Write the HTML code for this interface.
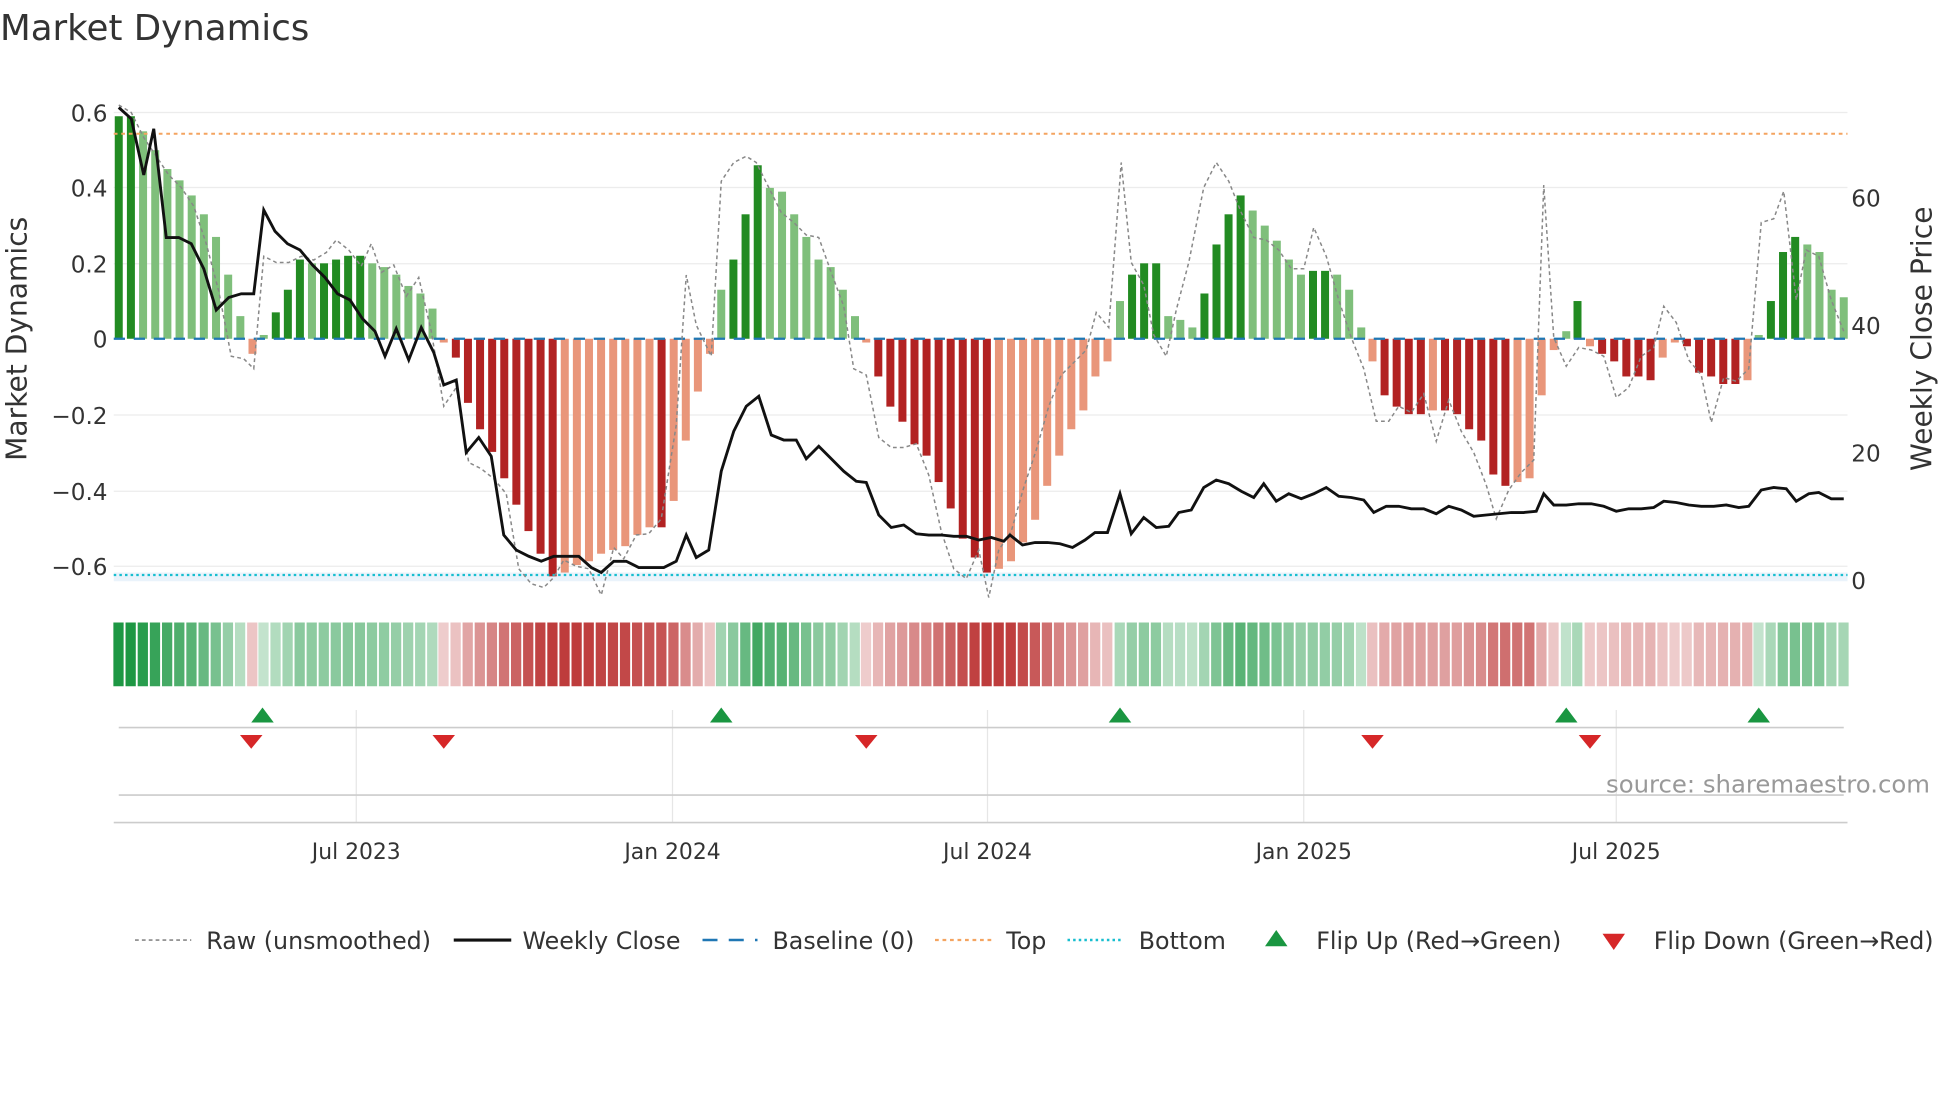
<!DOCTYPE html>
<html><head><meta charset="utf-8"><style>
html,body{margin:0;padding:0;background:#fff;overflow:hidden}
svg{display:block;font-family:"DejaVu Sans","Liberation Sans",sans-serif}
</style></head><body>
<svg id="s" width="1960" height="1102" viewBox="0 0 1568 881.6" xmlns="http://www.w3.org/2000/svg">
<text x="0" y="32" font-size="28.5" fill="#333">Market Dynamics</text>
<g stroke="#ececec" stroke-width="1">
<line x1="91" y1="90" x2="1478" y2="90"/><line x1="91" y1="150" x2="1478" y2="150"/><line x1="91" y1="211" x2="1478" y2="211"/>
<line x1="91" y1="332" x2="1478" y2="332"/><line x1="91" y1="393" x2="1478" y2="393"/><line x1="91" y1="453" x2="1478" y2="453"/>
</g>
<rect x="91" y="458" width="1387" height="7" fill="#eaf3fb"/>
<g id="bars"></g>
<line x1="91" y1="107" x2="1478" y2="107" stroke="#f4a460" stroke-width="1.6" stroke-dasharray="3,3"/>
<line x1="91" y1="460" x2="1478" y2="460" stroke="#17becf" stroke-width="1.8" stroke-dasharray="2,2.5"/>
<line x1="91" y1="271" x2="1478" y2="271" stroke="#1f77b4" stroke-width="1.8" stroke-dasharray="9,7"/>
<polyline id="raw" fill="none" stroke="#888" stroke-width="1.2" stroke-dasharray="3,2.5"/>
<polyline id="close" fill="none" stroke="#111" stroke-width="2.3"/>
<g font-size="18.5" fill="#333" text-anchor="end">
<text x="86" y="97">0.6</text><text x="86" y="157">0.4</text><text x="86" y="218">0.2</text><text x="86" y="278">0</text>
<text x="86" y="339">−0.2</text><text x="86" y="400">−0.4</text><text x="86" y="460">−0.6</text>
</g>
<g font-size="18.5" fill="#333">
<text x="1481" y="165">60</text><text x="1481" y="267">40</text><text x="1481" y="369">20</text><text x="1481" y="471">0</text>
</g>
<text transform="translate(21,271) rotate(-90)" font-size="22.5" fill="#333" text-anchor="middle">Market Dynamics</text>
<text transform="translate(1545,271) rotate(-90)" font-size="22.5" fill="#333" text-anchor="middle">Weekly Close Price</text>
<g id="heat"></g>
<g stroke="#e6e6e6" stroke-width="1">
<line x1="285" y1="568" x2="285" y2="658"/><line x1="538" y1="568" x2="538" y2="658"/><line x1="790" y1="568" x2="790" y2="658"/><line x1="1043" y1="568" x2="1043" y2="658"/><line x1="1293" y1="568" x2="1293" y2="658"/>
</g>
<line x1="95" y1="582" x2="1475" y2="582" stroke="#ccc" stroke-width="1.3"/>
<line x1="95" y1="636" x2="1475" y2="636" stroke="#ccc" stroke-width="1.3"/>
<line x1="91" y1="658" x2="1478" y2="658" stroke="#ccc" stroke-width="1.3"/>
<g fill="#1a9641" id="up"></g>
<g fill="#d62728" id="dn"></g>
<text x="1544" y="634" font-size="19.5" fill="#999" text-anchor="end">source: sharemaestro.com</text>
<g font-size="17.5" fill="#333" text-anchor="middle">
<text x="285" y="687">Jul 2023</text><text x="538" y="687">Jan 2024</text><text x="790" y="687">Jul 2024</text><text x="1043" y="687">Jan 2025</text><text x="1293" y="687">Jul 2025</text>
</g>
<g font-size="19" fill="#333">
<line x1="108" y1="752" x2="153" y2="752" stroke="#888" stroke-width="1.3" stroke-dasharray="3,2.5"/>
<text x="165" y="759">Raw (unsmoothed)</text>
<line x1="363" y1="752" x2="409" y2="752" stroke="#111" stroke-width="2.5"/>
<text x="418" y="759">Weekly Close</text>
<line x1="562" y1="752" x2="606" y2="752" stroke="#1f77b4" stroke-width="2" stroke-dasharray="12,9"/>
<text x="618" y="759">Baseline (0)</text>
<line x1="748" y1="752" x2="793" y2="752" stroke="#f4a460" stroke-width="1.8" stroke-dasharray="3,3"/>
<text x="805" y="759">Top</text>
<line x1="854" y1="752" x2="899" y2="752" stroke="#17becf" stroke-width="2" stroke-dasharray="2,2.5"/>
<text x="911" y="759">Bottom</text>
<polygon points="1012,757 1030,757 1021,744" fill="#1a9641"/>
<text x="1053" y="759">Flip Up (Red→Green)</text>
<polygon points="1282,747 1300,747 1291,760" fill="#d62728"/>
<text x="1323" y="759">Flip Down (Green→Red)</text>
</g>
</svg>
<script>
var NS="http://www.w3.org/2000/svg";
function el(p,t,a){var e=document.createElementNS(NS,t);for(var k in a)e.setAttribute(k,a[k]);document.getElementById(p).appendChild(e);return e;}
var segs=[
[95,202,[0.59,0.59,0.55,0.5,0.45,0.42,0.38,0.33,0.27,0.17,0.06,-0.04]],
[211,346,[0.01,0.07,0.13,0.21,0.2,0.2,0.21,0.22,0.22,0.2,0.19,0.17,0.14,0.12,0.08]],
[355,568,[-0.01,-0.05,-0.17,-0.24,-0.3,-0.37,-0.44,-0.51,-0.57,-0.63,-0.62,-0.6,-0.59,-0.57,-0.56,-0.55,-0.52,-0.5,-0.5,-0.43,-0.27,-0.14,-0.04]],
[577,684,[0.13,0.21,0.33,0.46,0.4,0.39,0.33,0.27,0.21,0.19,0.13,0.06]],
[693,886,[-0.01,-0.1,-0.18,-0.22,-0.28,-0.31,-0.38,-0.45,-0.53,-0.58,-0.62,-0.61,-0.59,-0.54,-0.48,-0.39,-0.31,-0.24,-0.19,-0.1,-0.06]],
[896,1089,[0.1,0.17,0.2,0.2,0.06,0.05,0.03,0.12,0.25,0.33,0.38,0.34,0.3,0.26,0.21,0.17,0.18,0.18,0.17,0.13,0.03]],
[1098,1243,[-0.06,-0.15,-0.18,-0.2,-0.2,-0.19,-0.19,-0.2,-0.24,-0.27,-0.36,-0.39,-0.38,-0.37,-0.15,-0.03]],
[1253,1262,[0.02,0.1]],
[1272,1398,[-0.02,-0.04,-0.06,-0.1,-0.1,-0.11,-0.05,-0.01,-0.02,-0.09,-0.1,-0.12,-0.12,-0.11]],
[1407,1475,[0.01,0.1,0.23,0.27,0.25,0.23,0.13,0.11]]];
var all=[];
segs.forEach(function(s){var n=s[2].length;for(var i=0;i<n;i++){all.push([n>1?s[0]+(s[1]-s[0])*i/(n-1):s[0],s[2][i]]);}});
var prev=0;
all.forEach(function(b){var v=b[1],inc=Math.abs(v)>=Math.abs(prev)-0.001&&(prev*v>=0||prev==0);
var c=v>=0?(inc?"#228b22":"#7fbf7b"):(inc?"#b22222":"#e9967a");
var y0=271,h=Math.abs(v)*301.7;
el("bars","rect",{x:b[0]-3.2,y:v>=0?y0-h:y0,width:6.4,height:Math.max(h,1),fill:c});
var m=Math.min(Math.abs(v)/0.6,1),a=0.25+0.75*m;
var base=v>=0?[26,150,65]:[190,60,60];
var r=Math.round(255+(base[0]-255)*a),g=Math.round(255+(base[1]-255)*a),bb=Math.round(255+(base[2]-255)*a);
el("heat","rect",{x:b[0]-4.3,y:498,width:8.2,height:51,fill:"rgb("+r+","+g+","+bb+")"});
prev=v;});
var close="95,86 105,95 115,140 123,103 133,190 143,190 153,195 163,215 173,248 183,238 193,235 203,235 211,168 220,185 230,195 240,200 250,212 260,222 270,235 280,240 290,255 300,265 308,285 317,263 327,288 337,262 347,282 355,308 365,304 373,362 383,350 393,365 403,428 413,440 423,445 433,449 443,445 453,445 463,445 473,454 481,458 491,449 501,449 511,454 521,454 531,454 541,449 549,428 557,446 567,440 577,377 587,345 597,325 607,317 617,348 627,352 637,352 645,367 655,357 665,367 675,377 685,385 693,386 703,412 713,422 723,420 733,427 743,428 753,428 763,429 773,429 783,432 793,430 803,433 808,428 818,436 828,434 838,434 848,435 858,438 868,432 876,426 886,426 896,395 905,427 915,414 925,422 935,421 943,410 953,408 963,390 973,384 983,387 993,393 1003,398 1011,387 1021,401 1031,395 1041,399 1051,395 1061,390 1071,397 1081,398 1091,400 1099,410 1109,405 1119,405 1129,407 1139,407 1149,411 1159,405 1169,408 1179,413 1189,412 1199,411 1209,410 1219,410 1229,409 1235,395 1243,404 1253,404 1263,403 1273,403 1283,405 1293,409 1303,407 1313,407 1323,406 1331,401 1341,402 1351,404 1361,405 1371,405 1381,404 1391,406 1399,405 1409,392 1419,390 1429,391 1437,401 1447,395 1455,394 1465,399 1475,399";
var raw="95,84 105,90 115,110 125,125 135,140 145,150 155,165 165,195 175,233 185,285 195,287 203,295 211,205 221,210 231,210 241,205 251,208 261,202 269,192 279,200 289,213 297,195 305,218 315,212 325,237 335,222 345,265 355,325 365,310 375,370 385,375 395,383 405,395 415,455 425,467 435,470 443,462 451,448 461,453 471,455 481,476 491,438 499,447 509,428 519,427 529,415 541,340 549,220 557,260 569,285 577,145 587,130 597,125 605,130 615,150 625,170 635,178 645,188 655,190 665,218 675,245 683,295 693,300 703,350 713,358 723,358 733,355 743,380 753,425 763,455 773,463 783,440 791,478 799,440 809,425 819,390 829,360 839,325 849,300 859,290 869,280 877,250 887,262 897,130 905,210 915,228 923,268 933,285 941,248 951,210 963,150 973,130 983,145 993,170 1003,190 1013,192 1023,200 1033,215 1043,215 1051,182 1061,205 1071,240 1081,270 1091,295 1101,337 1111,337 1119,325 1129,330 1139,315 1149,353 1159,320 1169,345 1179,362 1189,388 1197,415 1207,392 1217,378 1227,368 1235,148 1243,270 1253,293 1263,278 1273,280 1283,285 1293,318 1303,310 1313,285 1323,278 1331,245 1341,258 1351,288 1361,300 1369,338 1379,302 1389,305 1399,295 1409,178 1419,175 1427,153 1437,240 1445,200 1455,205 1465,240 1475,265";
document.getElementById("close").setAttribute("points",close);
document.getElementById("raw").setAttribute("points",raw);
[210,577,896,1253,1407].forEach(function(x){el("up","polygon",{points:(x-9)+",578 "+(x+9)+",578 "+x+",566"});});
[201,355,693,1098,1272].forEach(function(x){el("dn","polygon",{points:(x-9)+",588 "+(x+9)+",588 "+x+",599"});});
</script>
</body></html>
